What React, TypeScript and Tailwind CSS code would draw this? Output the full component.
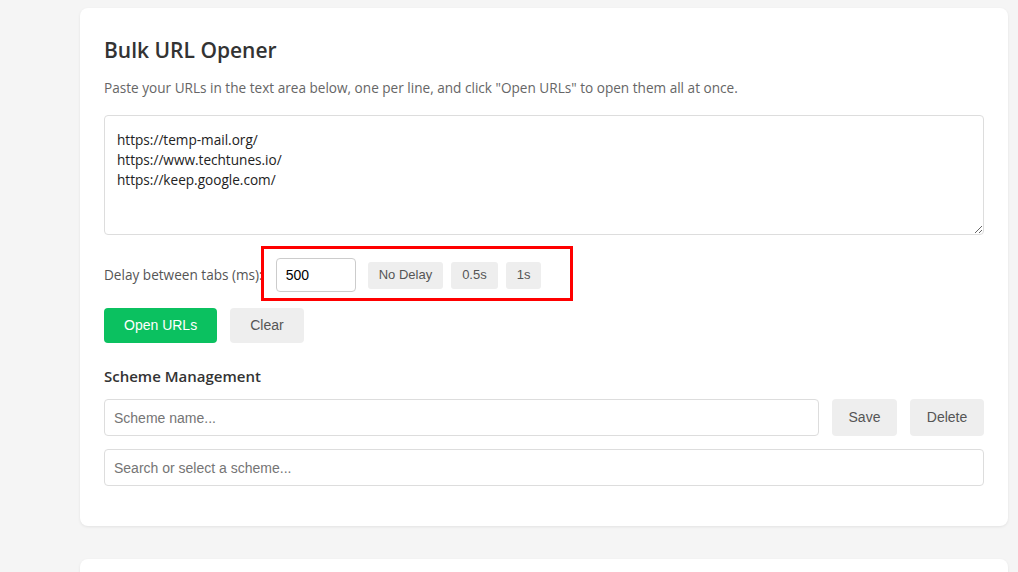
import React from "react";

export default function App() {
  const seg = { fontFamily: '"Open Sans", "Noto Sans", sans-serif' };
  const ari = { fontFamily: '"Liberation Sans", Arial, sans-serif' };
  return (
    <div className="min-h-[572px] w-[1018px] overflow-hidden bg-[#f5f5f5]" style={seg}>
      <div className="flex flex-col gap-[33px] pl-[80px] pr-[10px] pt-[8px]">
        <div className="rounded-[8px] bg-white px-[24px] pb-[40px] pt-[28px] shadow-[0_1px_3px_rgba(0,0,0,0.08)]">
          <h1 className="m-0 text-[21px] font-semibold leading-[28px] text-[#333]">Bulk URL Opener</h1>
          <p className="mt-[14px] text-[13.6px] leading-[20px] text-[#666]">
            Paste your URLs in the text area below, one per line, and click "Open URLs" to open them all at once.
          </p>
          <textarea
            className="mt-[17px] block h-[120px] w-full resize-y rounded-[4px] border border-[#ddd] px-[12px] py-[14px] text-[13.6px] leading-[20px] text-[#222] outline-none"
            style={seg}
            defaultValue={"https://temp-mail.org/\nhttps://www.techtunes.io/\nhttps://keep.google.com/"}
          />
          <div className="relative mt-[23px] flex h-[34px] items-center">
            <span className="text-[13.6px] text-[#555]">Delay between tabs (ms):</span>
            <input
              className="ml-[13px] h-[34px] w-[80px] rounded-[4px] border border-[#ccc] px-[9px] text-[14px] text-black outline-none"
              style={ari}
              defaultValue="500"
            />
            <div className="ml-[12px] flex gap-[8px]" style={ari}>
              <button className="h-[27px] rounded-[3px] bg-[#eee] px-[11px] text-[13px] text-[#555]">No Delay</button>
              <button className="h-[27px] rounded-[3px] bg-[#eee] px-[11px] text-[13px] text-[#555]">0.5s</button>
              <button className="h-[27px] rounded-[3px] bg-[#eee] px-[11px] text-[13px] text-[#555]">1s</button>
            </div>
            <div className="pointer-events-none absolute left-[157px] top-[-12px] h-[55px] w-[312px] border-[3px] border-[#ff0000]" />
          </div>
          <div className="mt-[16px] flex gap-[13px]" style={ari}>
            <button className="h-[35px] rounded-[4px] bg-[#0bc160] px-[20px] text-[14px] text-white">Open URLs</button>
            <button className="h-[35px] rounded-[4px] bg-[#eee] px-[20px] text-[14px] text-[#555]">Clear</button>
          </div>
          <h2 className="mt-[22px] text-[15px] font-semibold leading-[22px] text-[#333]">Scheme Management</h2>
          <div className="mt-[12px] flex gap-[13px]" style={ari}>
            <input
              className="h-[37px] flex-1 rounded-[4px] border border-[#ddd] px-[9px] text-[14px] text-[#333] outline-none placeholder:text-[#757575]"
              style={ari}
              placeholder="Scheme name..."
            />
            <button className="h-[37px] w-[65px] rounded-[4px] bg-[#eee] text-[14px] text-[#555]">Save</button>
            <button className="h-[37px] w-[74px] rounded-[4px] bg-[#eee] text-[14px] text-[#555]">Delete</button>
          </div>
          <input
            className="mt-[13px] block h-[37px] w-full rounded-[4px] border border-[#ddd] px-[9px] text-[14px] text-[#333] outline-none placeholder:text-[#757575]"
            style={ari}
            placeholder="Search or select a scheme..."
          />
        </div>
        <div className="h-[120px] rounded-[8px] bg-white shadow-[0_1px_3px_rgba(0,0,0,0.08)]" />
      </div>
    </div>
  );
}
